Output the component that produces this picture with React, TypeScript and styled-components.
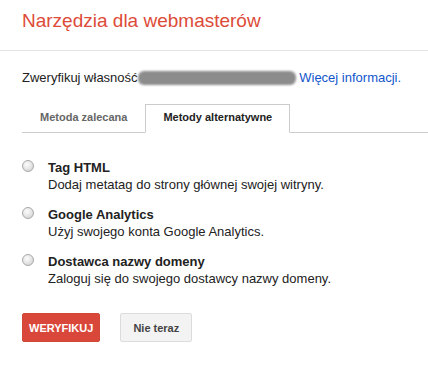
import React from 'react';
import styled, {createGlobalStyle} from 'styled-components';

const GlobalStyle = createGlobalStyle`
  body {
    margin: 0;
    background: #fff;
    font-family: "Liberation Sans", Arial, sans-serif;
    color: #222;
  }
`;

const Header = styled.div`
  box-sizing: border-box;
  height: 51px;
  padding: 9px 0 0 22px;
  border-bottom: 1px solid #e5e5e5;
`;

const Title = styled.h1`
  margin: 0;
  font-size: 19px;
  line-height: 24px;
  font-weight: normal;
  color: #dd4b39;
`;

const Content = styled.div`
  padding-left: 22px;
`;

const Intro = styled.p`
  margin: 18px 0 0;
  font-size: 13px;
  line-height: 17px;
  white-space: nowrap;
`;

const Redacted = styled.span`
  display: inline-block;
  width: 158px;
  height: 14px;
  vertical-align: -3px;
  background: #8c8c8c;
  border-radius: 6px;
  filter: blur(1px);
`;

const Link = styled.a`
  color: #15c;
  text-decoration: none;
`;

const TabBar = styled.div`
  display: flex;
  margin-top: 18px;
  border-bottom: 1px solid #ccc;
`;

const Tab = styled.div<{$active?: boolean}>`
  padding: 0 17px 3px;
  line-height: 24px;
  font-size: 11px;
  font-weight: bold;
  color: ${p => (p.$active ? '#222' : '#666')};
  border: 1px solid ${p => (p.$active ? '#ccc' : 'transparent')};
  border-bottom: ${p => (p.$active ? '1px solid #fff' : 'none')};
  margin-bottom: ${p => (p.$active ? '-1px' : '0')};
  background: #fff;
`;

const Options = styled.div`
  display: flex;
  flex-direction: column;
  gap: 13px;
  margin-top: 26px;
`;

const Option = styled.label`
  display: flex;
  gap: 14px;
  font-size: 13px;
  line-height: 17px;
`;

const Radio = styled.span`
  flex: none;
  box-sizing: border-box;
  width: 12px;
  height: 12px;
  margin-top: 1px;
  border-radius: 50%;
  border: 1px solid #a9a9a9;
  background: radial-gradient(circle at 40% 35%, #fcfcfc 0%, #e8e8e8 45%, #c9c9c9 100%);
`;

const OptionName = styled.div`
  font-weight: bold;
`;

const Buttons = styled.div`
  display: flex;
  gap: 20px;
  margin-top: 26px;
`;

const Button = styled.button<{$primary?: boolean}>`
  height: 29px;
  padding: 0 ${p => (p.$primary ? '6px' : '12px')};
  border-radius: 2px;
  font-family: "Liberation Sans", Arial, sans-serif;
  font-size: 11px;
  font-weight: bold;
  color: ${p => (p.$primary ? '#fff' : '#444')};
  background: ${p => (p.$primary ? '#d9473a' : '#f3f3f3')};
  border: 1px solid ${p => (p.$primary ? '#d14836' : '#dcdcdc')};
  cursor: pointer;
`;

const methods = [
    {name: 'Tag HTML', desc: 'Dodaj metatag do strony głównej swojej witryny.'},
    {name: 'Google Analytics', desc: 'Użyj swojego konta Google Analytics.'},
    {name: 'Dostawca nazwy domeny', desc: 'Zaloguj się do swojego dostawcy nazwy domeny.'},
];

export default function App() {
    return (
        <>
            <GlobalStyle/>
            <Header>
                <Title>Narzędzia dla webmasterów</Title>
            </Header>
            <Content>
                <Intro>
                    Zweryfikuj własność<Redacted/> <Link href="#">Więcej informacji.</Link>
                </Intro>

                <TabBar>
                    <Tab>Metoda zalecana</Tab>
                    <Tab $active>Metody alternatywne</Tab>
                </TabBar>

                <Options>
                    {methods.map(m => (
                        <Option key={m.name}>
                            <Radio/>
                            <div>
                                <OptionName>{m.name}</OptionName>
                                <div>{m.desc}</div>
                            </div>
                        </Option>
                    ))}
                </Options>

                <Buttons>
                    <Button $primary>WERYFIKUJ</Button>
                    <Button>Nie teraz</Button>
                </Buttons>
            </Content>
        </>
    );
}
